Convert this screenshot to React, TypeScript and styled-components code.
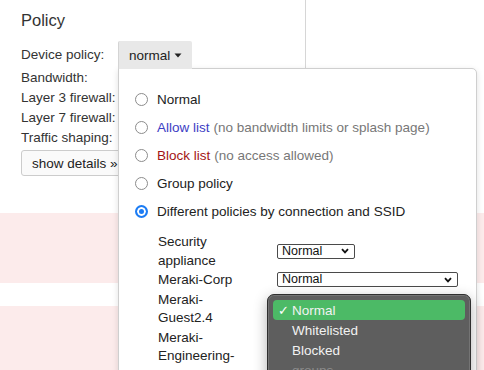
import React from "react";
import styled, { createGlobalStyle } from "styled-components";

const GlobalStyle = createGlobalStyle`
  html, body {
    margin: 0;
    padding: 0;
    background: #fff;
  }
  body {
    font-family: "Liberation Sans", Arial, sans-serif;
    font-size: 13.5px;
    color: #333;
  }
`;

const Page = styled.div`
  position: relative;
  width: 484px;
  height: 370px;
  overflow: hidden;
  background: #fff;
`;

const TopArea = styled.div`
  display: flex;
  height: 213px;
`;

const PolicyColumn = styled.div`
  width: 306px;
  box-sizing: border-box;
  border-right: 1px solid #d6d6d6;
  padding: 10px 0 0 21px;
`;

const Heading = styled.h3`
  margin: 0 0 11px;
  font-size: 16.5px;
  line-height: 20px;
  font-weight: normal;
  color: #333;
`;

const DeviceRow = styled.div`
  display: flex;
  align-items: center;
  height: 27px;
`;

const FieldLabel = styled.span`
  width: 97px;
  white-space: nowrap;
`;

const DropdownWrap = styled.div`
  position: relative;
`;

const PolicyButton = styled.button`
  position: relative;
  z-index: 2;
  display: flex;
  align-items: center;
  gap: 4px;
  height: 28px;
  margin-top: 1px;
  padding: 0 10px;
  border: none;
  border-left: 1px solid #d4d4d4;
  background: #e8e8e8;
  font: inherit;
  color: #222;
  border-radius: 2px 2px 0 0;
`;

const InfoRow = styled.div`
  height: 20px;
  line-height: 20px;
  white-space: nowrap;
`;

const DetailsButton = styled.button`
  margin-top: 2px;
  height: 26px;
  padding: 0 10px;
  border: 1px solid #ccc;
  border-radius: 3px;
  background: #fafafa;
  font: inherit;
  color: #222;
  white-space: nowrap;
`;

const Band = styled.div<{ $h: number; $pink?: boolean }>`
  height: ${(p) => p.$h}px;
  background: ${(p) => (p.$pink ? "#fcebeb" : "#fff")};
`;

const Panel = styled.div`
  position: absolute;
  top: calc(100% - 1px);
  left: 0;
  z-index: 1;
  width: 359px;
  height: 320px;
  box-sizing: border-box;
  padding: 16px 0 0 16px;
  background: #fff;
  border: 1px solid #cfcfcf;
  border-radius: 0 5px 0 0;
  box-shadow: 0 2px 6px rgba(0, 0, 0, 0.12);
`;

const OptionRow = styled.label`
  display: flex;
  align-items: center;
  gap: 9px;
  height: 28px;
  white-space: nowrap;
  color: #222;
`;

const Radio = styled.span<{ $checked?: boolean }>`
  width: 13px;
  height: 13px;
  box-sizing: border-box;
  border-radius: 50%;
  flex-shrink: 0;
  border: ${(p) => (p.$checked ? "2px solid #1c7cf4" : "1px solid #8c8c8c")};
  background: ${(p) => (p.$checked ? "#1c7cf4" : "#fff")};
  box-shadow: ${(p) => (p.$checked ? "inset 0 0 0 2px #fff" : "none")};
`;

const Colored = styled.span<{ $color: string }>`
  color: ${(p) => p.$color};
`;

const Note = styled.span`
  color: #777;
  margin-left: 4px;
`;

const SsidGrid = styled.div`
  display: grid;
  grid-template-columns: 90px auto;
  column-gap: 29px;
  align-items: center;
  margin: 7px 0 0 23px;
  line-height: 18.5px;
  color: #222;
`;

const SsidName = styled.div`
  padding: 1px 0 0;
`;

const FakeSelect = styled.div<{ $w: number }>`
  display: flex;
  align-items: center;
  justify-content: space-between;
  width: ${(p) => p.$w}px;
  height: 15px;
  box-sizing: border-box;
  padding: 0 5px 0 4px;
  border: 1px solid #4a4a4a;
  border-radius: 2px;
  background: #fff;
  font-size: 12.5px;
  line-height: 13px;
  color: #111;
`;

const NativeMenu = styled.div`
  position: absolute;
  left: 148px;
  top: 225px;
  width: 204px;
  height: 120px;
  box-sizing: border-box;
  padding: 5px;
  background: #5e5e5e;
  border: 1px solid #2f2f2f;
  border-radius: 7px;
  box-shadow: inset 0 0 0 1px rgba(255, 255, 255, 0.14),
    0 4px 14px rgba(0, 0, 0, 0.3);
  z-index: 3;
`;

const MenuItem = styled.div<{ $active?: boolean; $disabled?: boolean }>`
  display: flex;
  align-items: center;
  height: 20px;
  padding-left: 5px;
  border-radius: 4px;
  background: ${(p) => (p.$active ? "#4cba66" : "transparent")};
  color: ${(p) => (p.$disabled ? "#8a8a8a" : "#f2f2f2")};
  font-size: 13.5px;
`;

const Check = styled.span`
  width: 14px;
  font-size: 13px;
  color: #fff;
`;

const Chevron = () => (
  <svg width="8" height="6" viewBox="0 0 8 6">
    <path d="M1 1.2 L4 4.4 L7 1.2" fill="none" stroke="#111" strokeWidth="1.8" />
  </svg>
);

const Caret = () => (
  <svg width="8" height="5" viewBox="0 0 8 5">
    <path d="M0.5 0.5 H7.5 L4 4.5 Z" fill="#222" />
  </svg>
);

// rows 3+ sit under the open native menu, so their own select is not drawn
const ssids = [
  { name: "Security appliance", w: 78 },
  { name: "Meraki-Corp", w: 181 },
  { name: "Meraki-Guest2.4", w: 0 },
  { name: "Meraki-Engineering-SSO", w: 0 },
];

const menuItems = ["Normal", "Whitelisted", "Blocked", "groups"];

const App = () => {
  return (
    <Page>
      <GlobalStyle />
      <TopArea>
        <PolicyColumn>
          <Heading>Policy</Heading>
          <DeviceRow>
            <FieldLabel>Device policy:</FieldLabel>
            <DropdownWrap>
              <PolicyButton>
                normal <Caret />
              </PolicyButton>
              <Panel>
                <OptionRow>
                  <Radio />
                  Normal
                </OptionRow>
                <OptionRow>
                  <Radio />
                  <span>
                    <Colored $color="#3d3dc4">Allow list</Colored>
                    <Note>(no bandwidth limits or splash page)</Note>
                  </span>
                </OptionRow>
                <OptionRow>
                  <Radio />
                  <span>
                    <Colored $color="#a41414">Block list</Colored>
                    <Note>(no access allowed)</Note>
                  </span>
                </OptionRow>
                <OptionRow>
                  <Radio />
                  Group policy
                </OptionRow>
                <OptionRow>
                  <Radio $checked />
                  Different policies by connection and SSID
                </OptionRow>
                <SsidGrid>
                  {ssids.map((s) => (
                    <React.Fragment key={s.name}>
                      <SsidName>{s.name}</SsidName>
                      {s.w > 0 ? (
                        <FakeSelect $w={s.w}>
                          Normal <Chevron />
                        </FakeSelect>
                      ) : (
                        <div />
                      )}
                    </React.Fragment>
                  ))}
                </SsidGrid>
                <NativeMenu>
                  {menuItems.map((m, i) => (
                    <MenuItem key={m} $active={i === 0} $disabled={m === "groups"}>
                      <Check>{i === 0 ? "✓" : ""}</Check>
                      {m}
                    </MenuItem>
                  ))}
                </NativeMenu>
              </Panel>
            </DropdownWrap>
          </DeviceRow>
          <InfoRow>Bandwidth:</InfoRow>
          <InfoRow>Layer 3 firewall:</InfoRow>
          <InfoRow>Layer 7 firewall:</InfoRow>
          <InfoRow>Traffic shaping:</InfoRow>
          <DetailsButton>show details »</DetailsButton>
        </PolicyColumn>
      </TopArea>
      <Band $h={70} $pink />
      <Band $h={23} />
      <Band $h={70} $pink />
    </Page>
  );
};

export default App;
